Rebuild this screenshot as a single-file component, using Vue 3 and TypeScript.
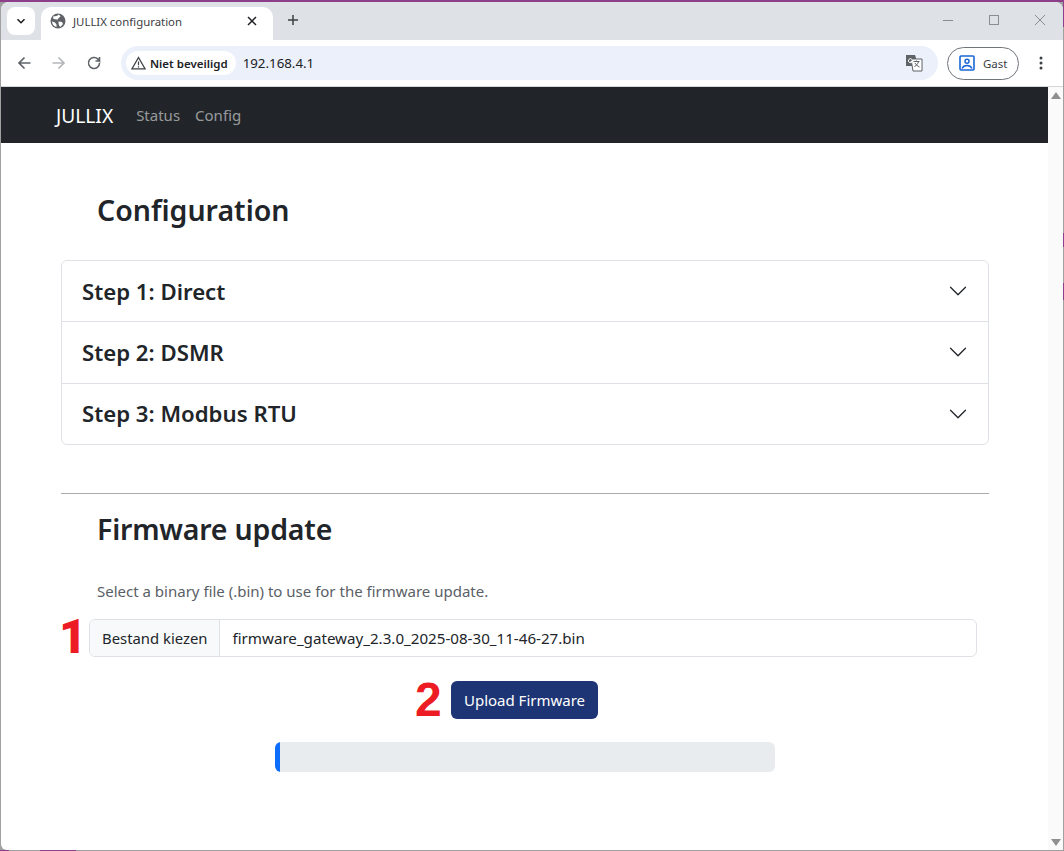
<script setup lang="ts">
const steps: string[] = ['Step 1: Direct', 'Step 2: DSMR', 'Step 3: Modbus RTU']
</script>

<template>
  <div class="desktop">
    <div class="window">
      <div class="tabstrip">
        <button class="tabsearch">
          <svg width="12" height="12" viewBox="0 0 12 12"><path d="M2.500 4.200 6 7.700l3.500-3.500" fill="none" stroke="#202124" stroke-width="1.600"/></svg>
        </button>
        <div class="tab">
          <svg class="globe" width="16" height="16" viewBox="0 0 16 16">
            <circle cx="8" cy="8" r="7.500" fill="#5f6368"/>
            <path d="M3 3.500 6.500 3 9 1.600l1.500 2-2 1.600-1 1.600-2-.6L3.500 6ZM8.500 8.500l3.500.5 1 2-2.500 3-1.500-1.500-.5-2.500ZM2 8.500l3 1 1.500 2v2.500A6 6 0 0 1 2 8.500Z" fill="#fff"/>
          </svg>
          <span class="tab-title">JULLIX configuration</span>
          <svg class="tab-close" width="10" height="10" viewBox="0 0 10 10"><path d="M1 1l8 8M9 1 1 9" stroke="#202124" stroke-width="1.500"/></svg>
        </div>
        <svg class="plus" width="12" height="12" viewBox="0 0 12 12"><path d="M6 1v10M1 6h10" stroke="#3c4043" stroke-width="1.500"/></svg>
        <div class="winctl">
          <svg width="12" height="12" viewBox="0 0 12 12"><path d="M1 6.500h10" stroke="#8a8d92" stroke-width="1"/></svg>
          <svg width="12" height="12" viewBox="0 0 12 12"><rect x="1.500" y="1.500" width="9" height="9" fill="none" stroke="#8a8d92" stroke-width="1"/></svg>
          <svg width="12" height="12" viewBox="0 0 12 12"><path d="M1 1l10 10M11 1 1 11" stroke="#8a8d92" stroke-width="1"/></svg>
        </div>
      </div>

      <div class="toolbar">
        <svg class="nav-ic" width="16" height="16" viewBox="0 0 16 16"><path d="M14.500 8H2.500M8.500 2.500 3 8l5.500 5.500" fill="none" stroke="#5f6368" stroke-width="1.700"/></svg>
        <svg class="nav-ic" width="16" height="16" viewBox="0 0 16 16"><path d="M1.500 8h12M7.500 2.500 13 8l-5.500 5.500" fill="none" stroke="#b4b6b9" stroke-width="1.700"/></svg>
        <svg class="nav-ic" width="16" height="16" viewBox="0 0 16 16"><path d="M13.500 8a5.500 5.500 0 1 1-1.600-3.900L13.500 6V2M13.500 6H9.500" fill="none" stroke="#5f6368" stroke-width="1.600"/></svg>
        <div class="omnibox">
          <div class="chip">
            <svg width="15" height="14" viewBox="0 0 15 14"><path d="M7.500 1.500 14 12.800H1Z" fill="none" stroke="#3c4043" stroke-width="1.300"/><path d="M7.500 5.500v3.800M7.500 10.200v1.200" stroke="#3c4043" stroke-width="1.200"/></svg>
            <span>Niet beveiligd</span>
          </div>
          <span class="url">192.168.4.1</span>
          <svg class="translate" width="18" height="18" viewBox="0 0 18 18">
            <path d="M1 1h9l1 3v8H1Z" fill="#5f6368"/>
            <path d="M6 5h11v12H8Z" fill="#fff" stroke="#5f6368" stroke-width="1"/>
            <path d="M8.500 7.500h6M11.500 6.500v1M13.500 7.500c-.5 2.500-2 4-4 5M10 9c.8 1.500 2.500 3 4.500 4" fill="none" stroke="#5f6368" stroke-width="1"/>
            <path d="M7 5.500a2 2 0 1 0 .3 2H5.500" fill="none" stroke="#fff" stroke-width="1"/>
          </svg>
        </div>
        <div class="guest">
          <svg width="16" height="16" viewBox="0 0 16 16">
            <rect x="1" y="1" width="14" height="14" rx="1" fill="none" stroke="#1a66d6" stroke-width="1.600"/>
            <circle cx="8" cy="6.200" r="2" fill="none" stroke="#1a66d6" stroke-width="1.500"/>
            <path d="M3 13.500c1-2.200 3-3 5-3s4 .8 5 3" fill="none" stroke="#1a66d6" stroke-width="1.500"/>
          </svg>
          <span>Gast</span>
        </div>
        <svg class="kebab" width="4" height="14" viewBox="0 0 4 14"><circle cx="2" cy="2" r="1.500" fill="#3c4043"/><circle cx="2" cy="7" r="1.500" fill="#3c4043"/><circle cx="2" cy="12" r="1.500" fill="#3c4043"/></svg>
      </div>

      <div class="viewport">
        <div class="page">
          <nav class="navbar">
            <span class="brand">JULLIX</span>
            <a class="navlink">Status</a>
            <a class="navlink">Config</a>
          </nav>
          <main class="content">
            <h2 class="title">Configuration</h2>
            <div class="accordion">
              <div v-for="s in steps" :key="s" class="acc-item">
                <span>{{ s }}</span>
                <svg width="20" height="20" viewBox="0 0 16 16"><path fill="#212529" fill-rule="evenodd" d="M1.646 4.646a.5.5 0 0 1 .708 0L8 10.293l5.646-5.647a.5.5 0 0 1 .708.708l-6 6a.5.5 0 0 1-.708 0l-6-6a.5.5 0 0 1 0-.708z"/></svg>
              </div>
            </div>
            <hr class="rule" />
            <h2 class="title fw">Firmware update</h2>
            <p class="hint">Select a binary file (.bin) to use for the firmware update.</p>
            <div class="file-row">
              <span class="mark one">1</span>
              <div class="file">
                <span class="file-btn">Bestand kiezen</span>
                <span class="file-name">firmware_gateway_2.3.0_2025-08-30_11-46-27.bin</span>
              </div>
            </div>
            <div class="upload-row">
              <span class="mark two">2</span>
              <button class="upload">Upload Firmware</button>
            </div>
            <div class="progress"><div class="bar" style="width: 1%"></div></div>
          </main>
        </div>
        <div class="scrollbar">
          <svg width="10" height="7" viewBox="0 0 10 7"><path d="M5 0 10 7H0Z" fill="#8f8f8f"/></svg>
          <svg width="10" height="7" viewBox="0 0 10 7"><path d="M0 0H10L5 7Z" fill="#8f8f8f"/></svg>
        </div>
      </div>
    </div>
  </div>
</template>

<style>
html, body { margin: 0; padding: 0; background: #fff; overflow: hidden; }
</style>

<style scoped>
.desktop {
  width: 1064px;
  height: 851px;
  padding-top: 2px;
  box-sizing: border-box;
  background:
    linear-gradient(#8e3f8c 0 2px, transparent 2px),
    linear-gradient(#8e3f8c 0 27px, #a0a0a0 27px 233px, #8e3f8c 233px 247px, #a0a0a0 247px 283px, #8e3f8c 283px 300px, #a0a0a0 300px) right / 1px 100% no-repeat,
    linear-gradient(90deg, #8e3f8c 0 9px, #a0a0a0 9px 40px, #8e3f8c 40px 76px, #a0a0a0 76px) bottom / 100% 1px no-repeat,
    #a0a0a0;
  overflow: hidden;
  font-family: "Noto Sans", "Open Sans", sans-serif;
  color: #212529;
}
.window {
  height: 848px;
  margin: 0 1px;
  background: #fff;
  border-radius: 8px 8px 0 6px;
  overflow: hidden;
  display: flex;
  flex-direction: column;
}
.tabstrip {
  height: 38px;
  background: #dee1e6;
  display: flex;
  align-items: flex-end;
  position: relative;
  flex: none;
}
.tabsearch {
  width: 28px;
  height: 28px;
  margin: 0 0 5px 6px;
  border: 0;
  padding: 0;
  border-radius: 8px;
  background: #fff;
  display: flex;
  align-items: center;
  justify-content: center;
}
.tab {
  width: 232px;
  height: 33px;
  margin-left: 6px;
  background: #fff;
  border-radius: 10px 10px 0 0;
  display: flex;
  align-items: center;
  padding: 0 16px 5px 9px;
  box-sizing: border-box;
}
.globe { flex: none; }
.tab-title {
  margin-left: 7px;
  font-size: 11.400px;
  flex: 1;
  white-space: nowrap;
  color: #3c4043;
}
.plus { margin: 0 0 14px 14px; }
.winctl {
  margin-left: auto;
  margin-bottom: 14px;
  display: flex;
  gap: 34px;
  padding-right: 17px;
}
.toolbar {
  height: 47px;
  background: #fff;
  border-bottom: 1px solid #d5d7da;
  box-sizing: border-box;
  display: flex;
  align-items: center;
  flex: none;
  padding-left: 15px;
}
.nav-ic { margin-right: 19px; flex: none; }
.omnibox {
  width: 817px;
  height: 34px;
  background: #ebf0fa;
  border-radius: 17px;
  display: flex;
  align-items: center;
  padding: 0 5px;
  box-sizing: border-box;
  flex: none;
}
.chip {
  height: 24px;
  background: #fff;
  border-radius: 12px;
  display: flex;
  align-items: center;
  gap: 4px;
  padding: 0 8px 0 5px;
  font-size: 11.500px;
  font-weight: 600;
  color: #202124;
  white-space: nowrap;
}
.url {
  margin-left: 7px;
  font-size: 13.300px;
  color: #202124;
  flex: 1;
}
.translate { margin-right: 10px; }
.guest {
  width: 72px;
  height: 33px;
  margin-left: 9px;
  border: 1px solid #70757a;
  border-radius: 17px;
  box-sizing: border-box;
  display: flex;
  align-items: center;
  gap: 8px;
  padding-left: 11px;
  font-size: 11.500px;
  color: #3c4043;
  flex: none;
}
.kebab { margin-left: 20px; }
.viewport {
  flex: 1;
  display: flex;
  min-height: 0;
}
.page { width: 1047px; flex: none; }
.navbar {
  height: 56px;
  background: #212529;
  display: flex;
  align-items: center;
  padding-left: 55px;
}
.brand { font-size: 19.200px; color: #fff; margin-right: 16px; }
.navlink {
  font-size: 15px;
  color: rgba(255, 255, 255, 0.55);
  padding: 0 8px 0 7px;
}
.content { padding: 0 0 0 60px; }
.title {
  margin: 0;
  padding: 47px 0 0 36px;
  font-size: 28.500px;
  line-height: 40px;
  font-weight: 600;
}
.accordion {
  width: 928px;
  margin-top: 30px;
  border: 1px solid #dee2e6;
  border-radius: 6px;
  box-sizing: border-box;
}
.acc-item {
  height: 61.500px;
  display: flex;
  align-items: center;
  justify-content: space-between;
  padding: 0 20px;
  font-size: 22.200px;
  font-weight: 600;
  border-top: 1px solid #dee2e6;
  box-sizing: border-box;
}
.acc-item:first-child { border-top: 0; height: 60px; }
.rule {
  width: 928px;
  margin: 48px 0 0;
  border: 0;
  border-top: 1px solid #a9abad;
}
.title.fw { padding-top: 15px; letter-spacing: -0.2px; }
.hint {
  margin: 30px 0 0 36px;
  font-size: 15px;
  line-height: 24px;
  color: #5a6066;
}
.file-row, .upload-row { display: flex; align-items: center; position: relative; }
.file-row { margin-top: 16px; padding-left: 28px; }
.mark {
  position: absolute;
  font-family: "Liberation Sans", Arial, sans-serif;
  font-weight: 700;
  font-size: 48px;
  line-height: 48px;
  color: #ed1c24;
}
.one { left: -2px; top: -6px; font-family: Roboto, sans-serif; font-weight: 900; }
.two { left: 354px; top: -5px; }
.file {
  width: 888px;
  height: 38px;
  border: 1px solid #dee2e6;
  border-radius: 6px;
  box-sizing: border-box;
  display: flex;
  align-items: center;
  overflow: hidden;
}
.file-btn {
  height: 100%;
  display: flex;
  align-items: center;
  padding: 0 12px;
  background: #f8f9fa;
  border-right: 1px solid #dee2e6;
  white-space: nowrap;
  font-size: 14.850px;
}
.file-name { padding-left: 12px; white-space: nowrap; font-size: 15.150px; }
.upload-row { margin-top: 24px; padding-left: 390px; }
.upload {
  width: 147px;
  height: 38px;
  background: #1d3574;
  color: #fff;
  border: 0;
  border-radius: 6px;
  padding: 0;
  font-family: inherit;
  font-size: 15px;
}
.progress {
  width: 500px;
  height: 30px;
  margin: 23px 0 0 214px;
  background: #e9ecef;
  border-radius: 6px;
  overflow: hidden;
}
.bar { height: 100%; background: #0d6efd; }
.scrollbar {
  width: 16px;
  flex: none;
  background: #fafafa;
  display: flex;
  flex-direction: column;
  justify-content: space-between;
  align-items: center;
  padding: 5px 0 4px;
  box-sizing: border-box;
}
</style>
